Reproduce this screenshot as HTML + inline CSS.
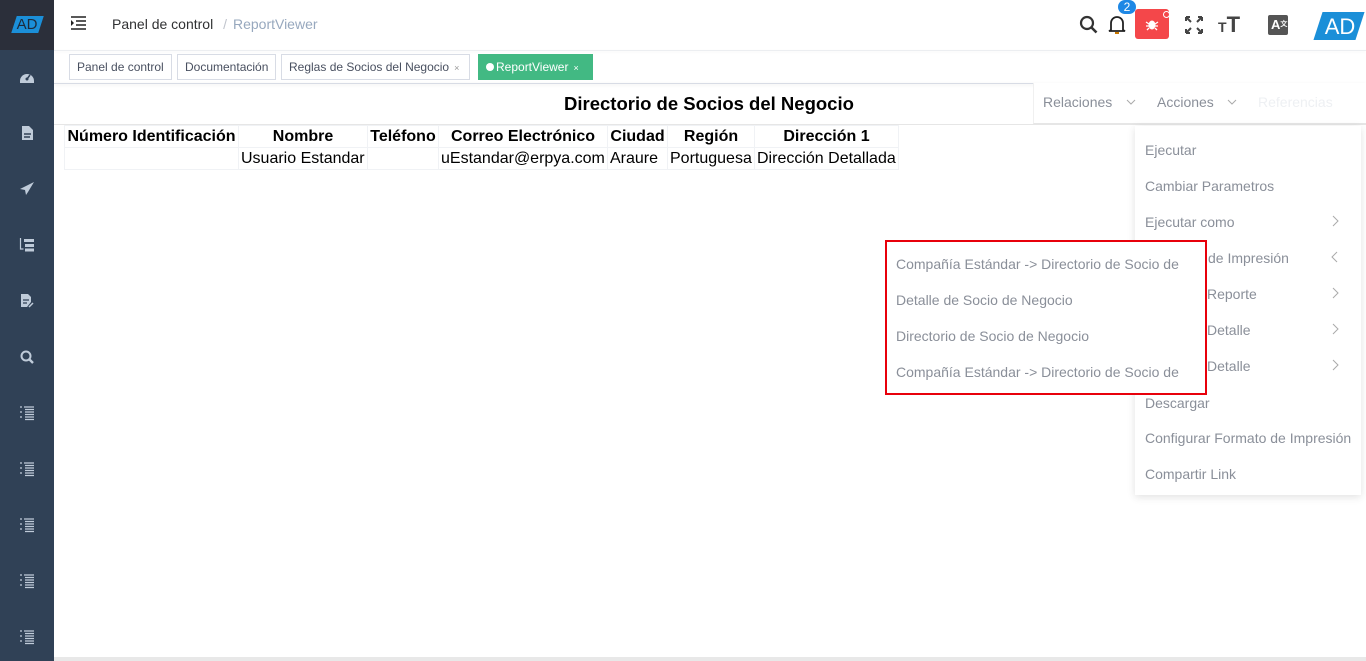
<!DOCTYPE html>
<html><head><meta charset="utf-8"><style>
*{margin:0;padding:0;box-sizing:border-box}
body{width:1366px;height:661px;overflow:hidden;background:#fff;font-family:"Liberation Sans",sans-serif;position:relative}
.abs{position:absolute}
#side{left:0;top:0;width:54px;height:661px;background:#304156}
#logoBox{left:0;top:0;width:54px;height:50px;background:#2b2f3a}
.ico{position:absolute;left:19px;width:16px;height:16px}
.tab{position:absolute;top:54px;height:26px;border:1px solid #d8dce5;font-size:12px;color:#495060;line-height:24px;padding:0 7px;background:#fff;white-space:nowrap}
.tab .x{font-size:9px;color:#999;margin-left:5px}
table{border-collapse:collapse;position:absolute;left:64px;top:125px;font-size:16px}
td,th{border:1px solid #f0f2f5;padding:0 2px;height:22px;white-space:nowrap}
th{font-weight:bold;text-align:center}
#menu{left:1135px;top:126px;width:226px;height:369px;background:#fff;box-shadow:0 2px 8px rgba(0,0,0,.12)}
.mi{position:absolute;left:10px;font-size:14px;color:#8a8f99;white-space:nowrap}
.ch{position:absolute;left:196px;width:8px;height:12px}
#sub{left:885px;top:240px;width:322px;height:155px;background:#fff;border:2px solid #e8000b}
.si{position:absolute;left:9px;font-size:14px;color:#8a8f99;white-space:nowrap}
</style></head><body>
<div id="side" class="abs">
<div id="logoBox" class="abs"></div>
<div class="abs" style="left:14px;top:16px;width:27px;height:17px;background:#1b8fd8;transform:skewX(-18deg)"></div>
<div class="abs" style="left:15px;top:15px;font-size:15px;color:#1d2a3a;width:24px;text-align:center;line-height:19px">AD</div>
<svg class="ico" style="top:69px" viewBox="0 0 16 16"><path d="M1 12a7 7 0 0 1 14 0v2H1z" fill="#bfcbd9"/><circle cx="8" cy="10" r="1.5" fill="#304156"/><path d="M8 10l3-4" stroke="#304156" stroke-width="1.5"/></svg>
<svg class="ico" style="top:125px" viewBox="0 0 16 16"><path d="M3 1h7l4 4v10H3z" fill="#bfcbd9"/><path d="M5 9h7M5 12h6" stroke="#304156" stroke-width="1.4"/></svg>
<svg class="ico" style="top:181px" viewBox="0 0 16 16"><path d="M15 1L1 8l5 1 1 5 2-3z" fill="#bfcbd9"/></svg>
<svg class="ico" style="top:237px" viewBox="0 0 16 16"><path d="M1.5 1v11h3" fill="none" stroke="#bfcbd9" stroke-width="1.2"/><path d="M5 2h10v3H5zM6 7h9v3H6zM6 11.5h9v3H6z" fill="#bfcbd9"/></svg>
<svg class="ico" style="top:293px" viewBox="0 0 16 16"><path d="M2 1h7l3 3v5l-4 5H2z" fill="#bfcbd9"/><path d="M4 7h6M4 10h4" stroke="#304156" stroke-width="1.3"/><path d="M10 14l4-4" stroke="#bfcbd9" stroke-width="1.5"/></svg>
<svg class="ico" style="top:349px" viewBox="0 0 16 16"><circle cx="7" cy="7" r="4.5" fill="none" stroke="#bfcbd9" stroke-width="2"/><path d="M10 10l4 4" stroke="#bfcbd9" stroke-width="2.4"/></svg>
<svg class="ico" style="top:405px" viewBox="0 0 16 16"><path d="M1 2h2M5 2h10M1 7h2M6 7h9M1 12h2M6 12h9M6 4.5h9M6 9.5h9M6 14.5h9" stroke="#bfcbd9" stroke-width="1.3"/></svg>
<svg class="ico" style="top:461px" viewBox="0 0 16 16"><path d="M1 2h2M5 2h10M1 7h2M6 7h9M1 12h2M6 12h9M6 4.5h9M6 9.5h9M6 14.5h9" stroke="#bfcbd9" stroke-width="1.3"/></svg>
<svg class="ico" style="top:517px" viewBox="0 0 16 16"><path d="M1 2h2M5 2h10M1 7h2M6 7h9M1 12h2M6 12h9M6 4.5h9M6 9.5h9M6 14.5h9" stroke="#bfcbd9" stroke-width="1.3"/></svg>
<svg class="ico" style="top:573px" viewBox="0 0 16 16"><path d="M1 2h2M5 2h10M1 7h2M6 7h9M1 12h2M6 12h9M6 4.5h9M6 9.5h9M6 14.5h9" stroke="#bfcbd9" stroke-width="1.3"/></svg>
<svg class="ico" style="top:629px" viewBox="0 0 16 16"><path d="M1 2h2M5 2h10M1 7h2M6 7h9M1 12h2M6 12h9M6 4.5h9M6 9.5h9M6 14.5h9" stroke="#bfcbd9" stroke-width="1.3"/></svg>
</div>
<!-- navbar -->
<div class="abs" style="left:54px;top:50px;width:1312px;height:1px;background:#eceef1;box-shadow:0 1px 3px rgba(0,0,0,.06)"></div>
<svg class="abs" style="left:70px;top:16px" width="17" height="14" viewBox="0 0 17 14"><path d="M1 1h15M6 5h10M6 9h10M1 13h15" stroke="#222" stroke-width="1.6"/><path d="M1 4l3 3-3 3z" fill="#222"/></svg>
<div class="abs" style="left:112px;top:16px;font-size:14px;color:#303133">Panel de control <span style="color:#c0c4cc;margin:0 6px">/</span><span style="color:#97a8be">ReportViewer</span></div>
<svg class="abs" style="left:1079px;top:15px" width="20" height="20" viewBox="0 0 20 20"><circle cx="8" cy="8" r="6" fill="none" stroke="#333" stroke-width="2.2"/><path d="M12.5 12.5l5 5" stroke="#333" stroke-width="2.6"/></svg>
<svg class="abs" style="left:1107px;top:14px" width="20" height="22" viewBox="0 0 20 22"><path d="M4 16V9a6 6 0 0 1 12 0v7l2 1H2z" fill="none" stroke="#222" stroke-width="1.8"/><path d="M8 19h4" stroke="#c77700" stroke-width="2"/></svg>
<div class="abs" style="left:1118px;top:0;width:18px;height:14px;border-radius:7px;background:#1e88e5;color:#fff;font-size:12px;text-align:center;line-height:14px">2</div>
<div class="abs" style="left:1135px;top:9px;width:34px;height:30px;background:#f4474a;border-radius:3px"></div>
<div class="abs" style="left:1163px;top:11px;width:7px;height:7px;border-radius:50%;border:1.5px solid #fff;background:#f4474a"></div>
<svg class="abs" style="left:1145px;top:17px" width="14" height="14" viewBox="0 0 14 14"><ellipse cx="7" cy="8" rx="3.5" ry="4.5" fill="#fff"/><path d="M1 5l3 2M13 5l-3 2M1 9h3M13 9h-3M2 13l2-2M12 13l-2-2" stroke="#fff" stroke-width="1.3"/></svg>
<svg class="abs" style="left:1184px;top:15px" width="20" height="20" viewBox="0 0 20 20"><path d="M2 2l5 5M2 2h4M2 2v4M18 2l-5 5M18 2h-4M18 2v4M2 18l5-5M2 18h4M2 18v-4M18 18l-5-5M18 18h-4M18 18v-4" stroke="#444" stroke-width="2"/></svg>
<div class="abs" style="left:1218px;top:12px;font-weight:bold;color:#444"><span style="font-size:14px">T</span><span style="font-size:22px">T</span></div>
<div class="abs" style="left:1268px;top:15px;width:20px;height:20px;background:#555;border-radius:2px;color:#fff;font-size:13px;line-height:20px;padding-left:3px;font-weight:bold">A<span style="font-size:7px;vertical-align:top">文</span></div>
<div class="abs" style="left:1318px;top:12px;width:42px;height:28px;background:#1b8fd8;transform:skewX(-18deg)"></div>
<div class="abs" style="left:1320px;top:13px;width:40px;text-align:center;color:#fff;font-size:22px;line-height:27px">AD</div>
<!-- tabs -->
<div class="abs" style="left:54px;top:83px;width:1312px;height:1px;background:#d8dce5;box-shadow:0 1px 3px rgba(0,0,0,.1)"></div>
<div class="tab" style="left:69px;width:103px">Panel de control</div>
<div class="tab" style="left:177px;width:99px">Documentación</div>
<div class="tab" style="left:281px;width:189px">Reglas de Socios del Negocio<span class="x">×</span></div>
<div class="tab" style="left:478px;width:115px;background:#42b983;border-color:#42b983;color:#fff;padding:0 7px"><span style="display:inline-block;width:8px;height:8px;border-radius:50%;background:#fff;margin-right:2px"></span>ReportViewer<span class="x" style="color:#fff">×</span></div>
<!-- content -->
<div class="abs" style="left:564px;top:93px;font-size:18.5px;font-weight:bold;white-space:nowrap">Directorio de Socios del Negocio</div>
<div class="abs" style="left:1033px;top:83px;width:333px;height:41px;background:#fff;border-bottom:1px solid #e6e6e6;border-left:1px solid #f0f0f0"></div>
<div class="abs" style="left:1043px;top:94px;font-size:14px;color:#8a8f99">Relaciones</div>
<svg class="abs" style="left:1126px;top:99px" width="10" height="6" viewBox="0 0 10 6"><path d="M1 1l4 4 4-4" fill="none" stroke="#aaa"/></svg>
<div class="abs" style="left:1157px;top:94px;font-size:14px;color:#8a8f99">Acciones</div>
<svg class="abs" style="left:1227px;top:99px" width="10" height="6" viewBox="0 0 10 6"><path d="M1 1l4 4 4-4" fill="none" stroke="#aaa"/></svg>
<div class="abs" style="left:1258px;top:94px;font-size:14px;color:#eef0f3">Referencias</div>
<div class="abs" style="left:54px;top:124px;width:1312px;height:1px;background:#e6e6e6"></div>
<table>
<tr><th style="width:174px">Número Identificación</th><th style="width:129px">Nombre</th><th style="width:71px">Teléfono</th><th style="width:169px">Correo Electrónico</th><th style="width:60px">Ciudad</th><th style="width:87px">Región</th><th style="width:144px">Dirección 1</th></tr>
<tr><td></td><td>Usuario Estandar</td><td></td><td>uEstandar@erpya.com</td><td>Araure</td><td>Portuguesa</td><td>Dirección Detallada</td></tr>
</table>
<div id="menu" class="abs">
<div class="mi" style="top:16px">Ejecutar</div>
<div class="mi" style="top:52px">Cambiar Parametros</div>
<div class="mi" style="top:88px">Ejecutar como</div><svg class="ch" style="top:89px" viewBox="0 0 8 12"><path d="M2 1l5 5-5 5" fill="none" stroke="#aaa"/></svg>
<div class="mi" style="top:124px;left:73px">de Impresión</div><svg class="ch" style="top:125px" viewBox="0 0 8 12"><path d="M6 1L1 6l5 5" fill="none" stroke="#aaa"/></svg>
<div class="mi" style="top:160px;left:72px">Reporte</div><svg class="ch" style="top:161px" viewBox="0 0 8 12"><path d="M2 1l5 5-5 5" fill="none" stroke="#aaa"/></svg>
<div class="mi" style="top:196px;left:72px">Detalle</div><svg class="ch" style="top:197px" viewBox="0 0 8 12"><path d="M2 1l5 5-5 5" fill="none" stroke="#aaa"/></svg>
<div class="mi" style="top:232px;left:72px">Detalle</div><svg class="ch" style="top:233px" viewBox="0 0 8 12"><path d="M2 1l5 5-5 5" fill="none" stroke="#aaa"/></svg>
<div class="mi" style="top:269px">Descargar</div>
<div class="mi" style="top:304px">Configurar Formato de Impresión</div>
<div class="mi" style="top:340px">Compartir Link</div>
</div>
<div id="sub" class="abs">
<div class="si" style="top:14px">Compañía Estándar -&gt; Directorio de Socio de</div>
<div class="si" style="top:50px">Detalle de Socio de Negocio</div>
<div class="si" style="top:86px">Directorio de Socio de Negocio</div>
<div class="si" style="top:122px">Compañía Estándar -&gt; Directorio de Socio de</div>
</div>
<div class="abs" style="left:54px;top:657px;width:1312px;height:4px;background:#e8e8e8"></div>
</body></html>
